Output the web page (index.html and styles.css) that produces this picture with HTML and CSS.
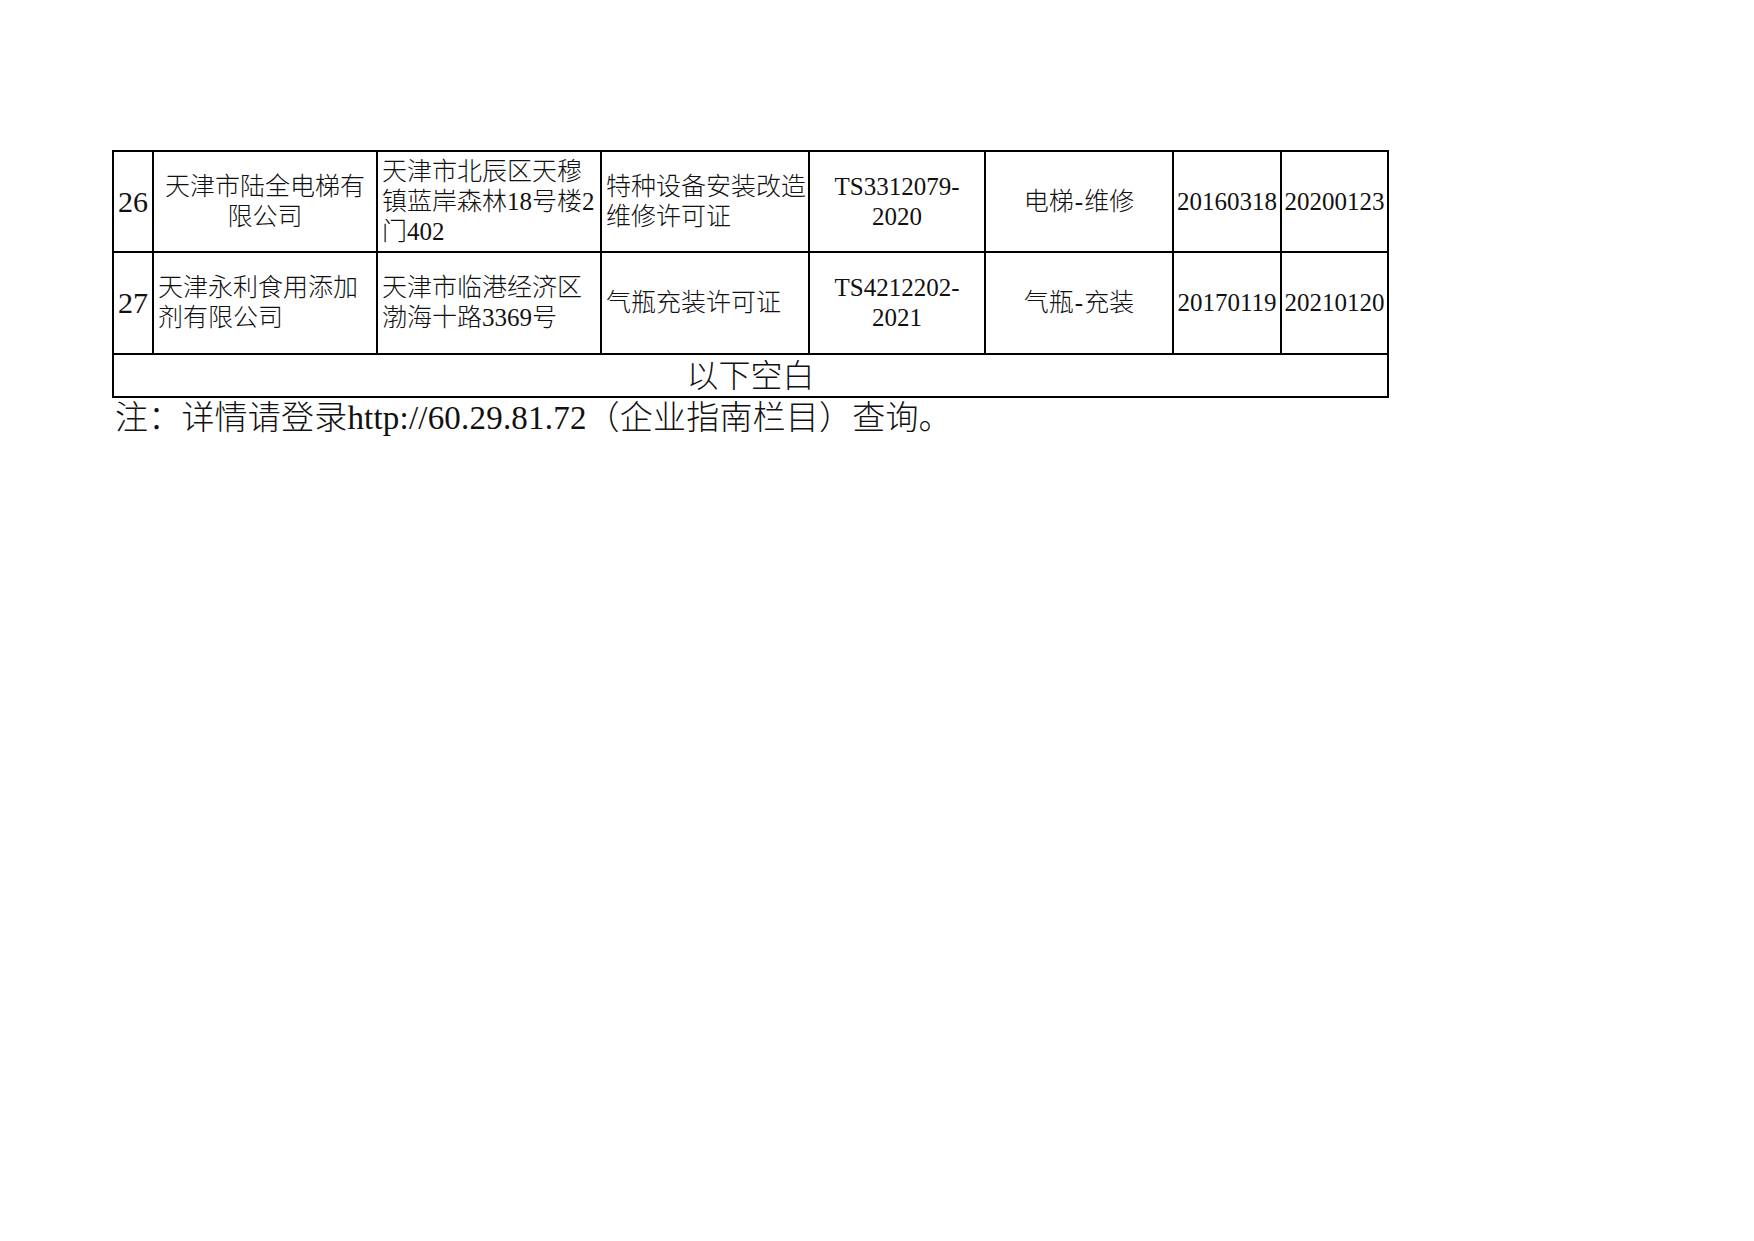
FILE: index.html
```html
<!DOCTYPE html>
<html lang="zh-CN">
<head>
<meta charset="utf-8">
<title>许可证列表</title>
<link rel="stylesheet" href="styles.css">
</head>
<body>
<div class="page">
  <table class="list">
    <colgroup>
      <col class="c-no">
      <col class="c-name">
      <col class="c-addr">
      <col class="c-lic">
      <col class="c-code">
      <col class="c-item">
      <col class="c-date">
      <col class="c-date2">
    </colgroup>
    <tbody>
      <tr class="r1">
        <td class="no">26</td>
        <td class="center">天津市陆全电梯有<br>限公司</td>
        <td class="left">天津市北辰区天穆<br>镇蓝岸森林18号楼2<br>门402</td>
        <td class="left">特种设备安装改造<br>维修许可证</td>
        <td class="center">TS3312079-<br>2020</td>
        <td class="center">电梯<span class="dash">-</span>维修</td>
        <td class="center">20160318</td>
        <td class="center">20200123</td>
      </tr>
      <tr class="r2">
        <td class="no">27</td>
        <td class="left">天津永利食用添加<br>剂有限公司</td>
        <td class="left">天津市临港经济区<br>渤海十路3369号</td>
        <td class="left">气瓶充装许可证</td>
        <td class="center">TS4212202-<br>2021</td>
        <td class="center">气瓶<span class="dash">-</span>充装</td>
        <td class="center">20170119</td>
        <td class="center">20210120</td>
      </tr>
      <tr class="r3">
        <td class="blank" colspan="8">以下空白</td>
      </tr>
    </tbody>
  </table>
  <p class="note">注：详情请登录http://60.29.81.72（企业指南栏目）查询。</p>
</div>
</body>
</html>
```

FILE: styles.css
```css
html, body {
  margin: 0;
  padding: 0;
  background: #ffffff;
}

body {
  color: #111111;
  font-family: "Liberation Serif", "Noto Sans CJK SC", serif;
}

.page {
  padding: 150px 0 0 112px;
}

.list {
  border-collapse: collapse;
  table-layout: fixed;
  width: 1277px;
}

.c-no { width: 40px; }
.c-name { width: 224px; }
.c-addr { width: 224px; }
.c-lic { width: 208px; }
.c-code { width: 176px; }
.c-item { width: 188px; }
.c-date { width: 108px; }
.c-date2 { width: 107px; }

.list td {
  border: 2px solid #000000;
  padding: 0 4px;
  font-size: 25px;
  line-height: 30px;
  vertical-align: middle;
  white-space: nowrap;
  overflow: hidden;
  font-weight: 300;
}

.r1 td { height: 99px; }
.r2 td { height: 100px; }
.r3 td { height: 41px; }

.list td.no {
  font-size: 30px;
  padding: 0;
  text-align: center;
}

.list td.center {
  text-align: center;
  padding: 0 2px;
}

.list td.left {
  text-align: left;
  padding: 0 4px;
}

.dash {
  display: inline-block;
  padding: 0 1px;
}

.list td.blank {
  text-align: center;
  font-size: 32px;
  line-height: 36px;
}

.note {
  margin: 0;
  padding-left: 3px;
  font-size: 33px;
  line-height: 40px;
  font-weight: 300;
  letter-spacing: 0.2px;
}
```
